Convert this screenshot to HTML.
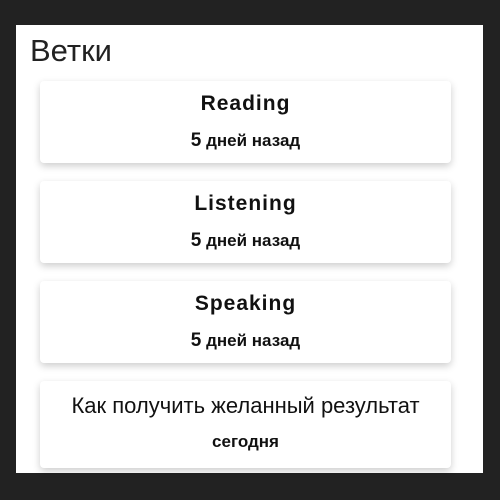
<html><head><style>
body{margin:0;width:500px;height:500px;background:#222;position:relative;font-family:"Liberation Sans","DejaVu Sans",sans-serif;overflow:hidden}
.p{position:absolute;left:16px;top:25px;width:467px;height:448px;background:#fff}
h1{position:absolute;left:14px;top:8px;margin:0;font-weight:normal;font-size:31px;color:#222}
.c{position:absolute;left:24px;width:411px;height:82px;background:#fff;border-radius:4px;box-shadow:0 3px 8px rgba(0,0,0,.2);text-align:center;color:#111}
.t{position:absolute;left:0;right:0;top:11px;font-size:21px;font-weight:bold;letter-spacing:1px}
.s{position:absolute;left:0;right:0;top:49px;font-size:17px;font-weight:bold}
.s b{font-size:19px}
</style></head><body><div class="p">
<h1>Ветки</h1>
<div class="c" style="top:56px"><div class="t">Reading</div><div class="s"><b>5</b> дней назад</div></div>
<div class="c" style="top:156px"><div class="t">Listening</div><div class="s"><b>5</b> дней назад</div></div>
<div class="c" style="top:256px"><div class="t">Speaking</div><div class="s"><b>5</b> дней назад</div></div>
<div class="c" style="top:356px;height:87px"><div class="t" style="font-weight:normal;font-size:22px;letter-spacing:0;top:12px">Как получить желанный результат</div><div class="s" style="top:51px;font-size:17px">сегодня</div></div>
</div></body></html>
